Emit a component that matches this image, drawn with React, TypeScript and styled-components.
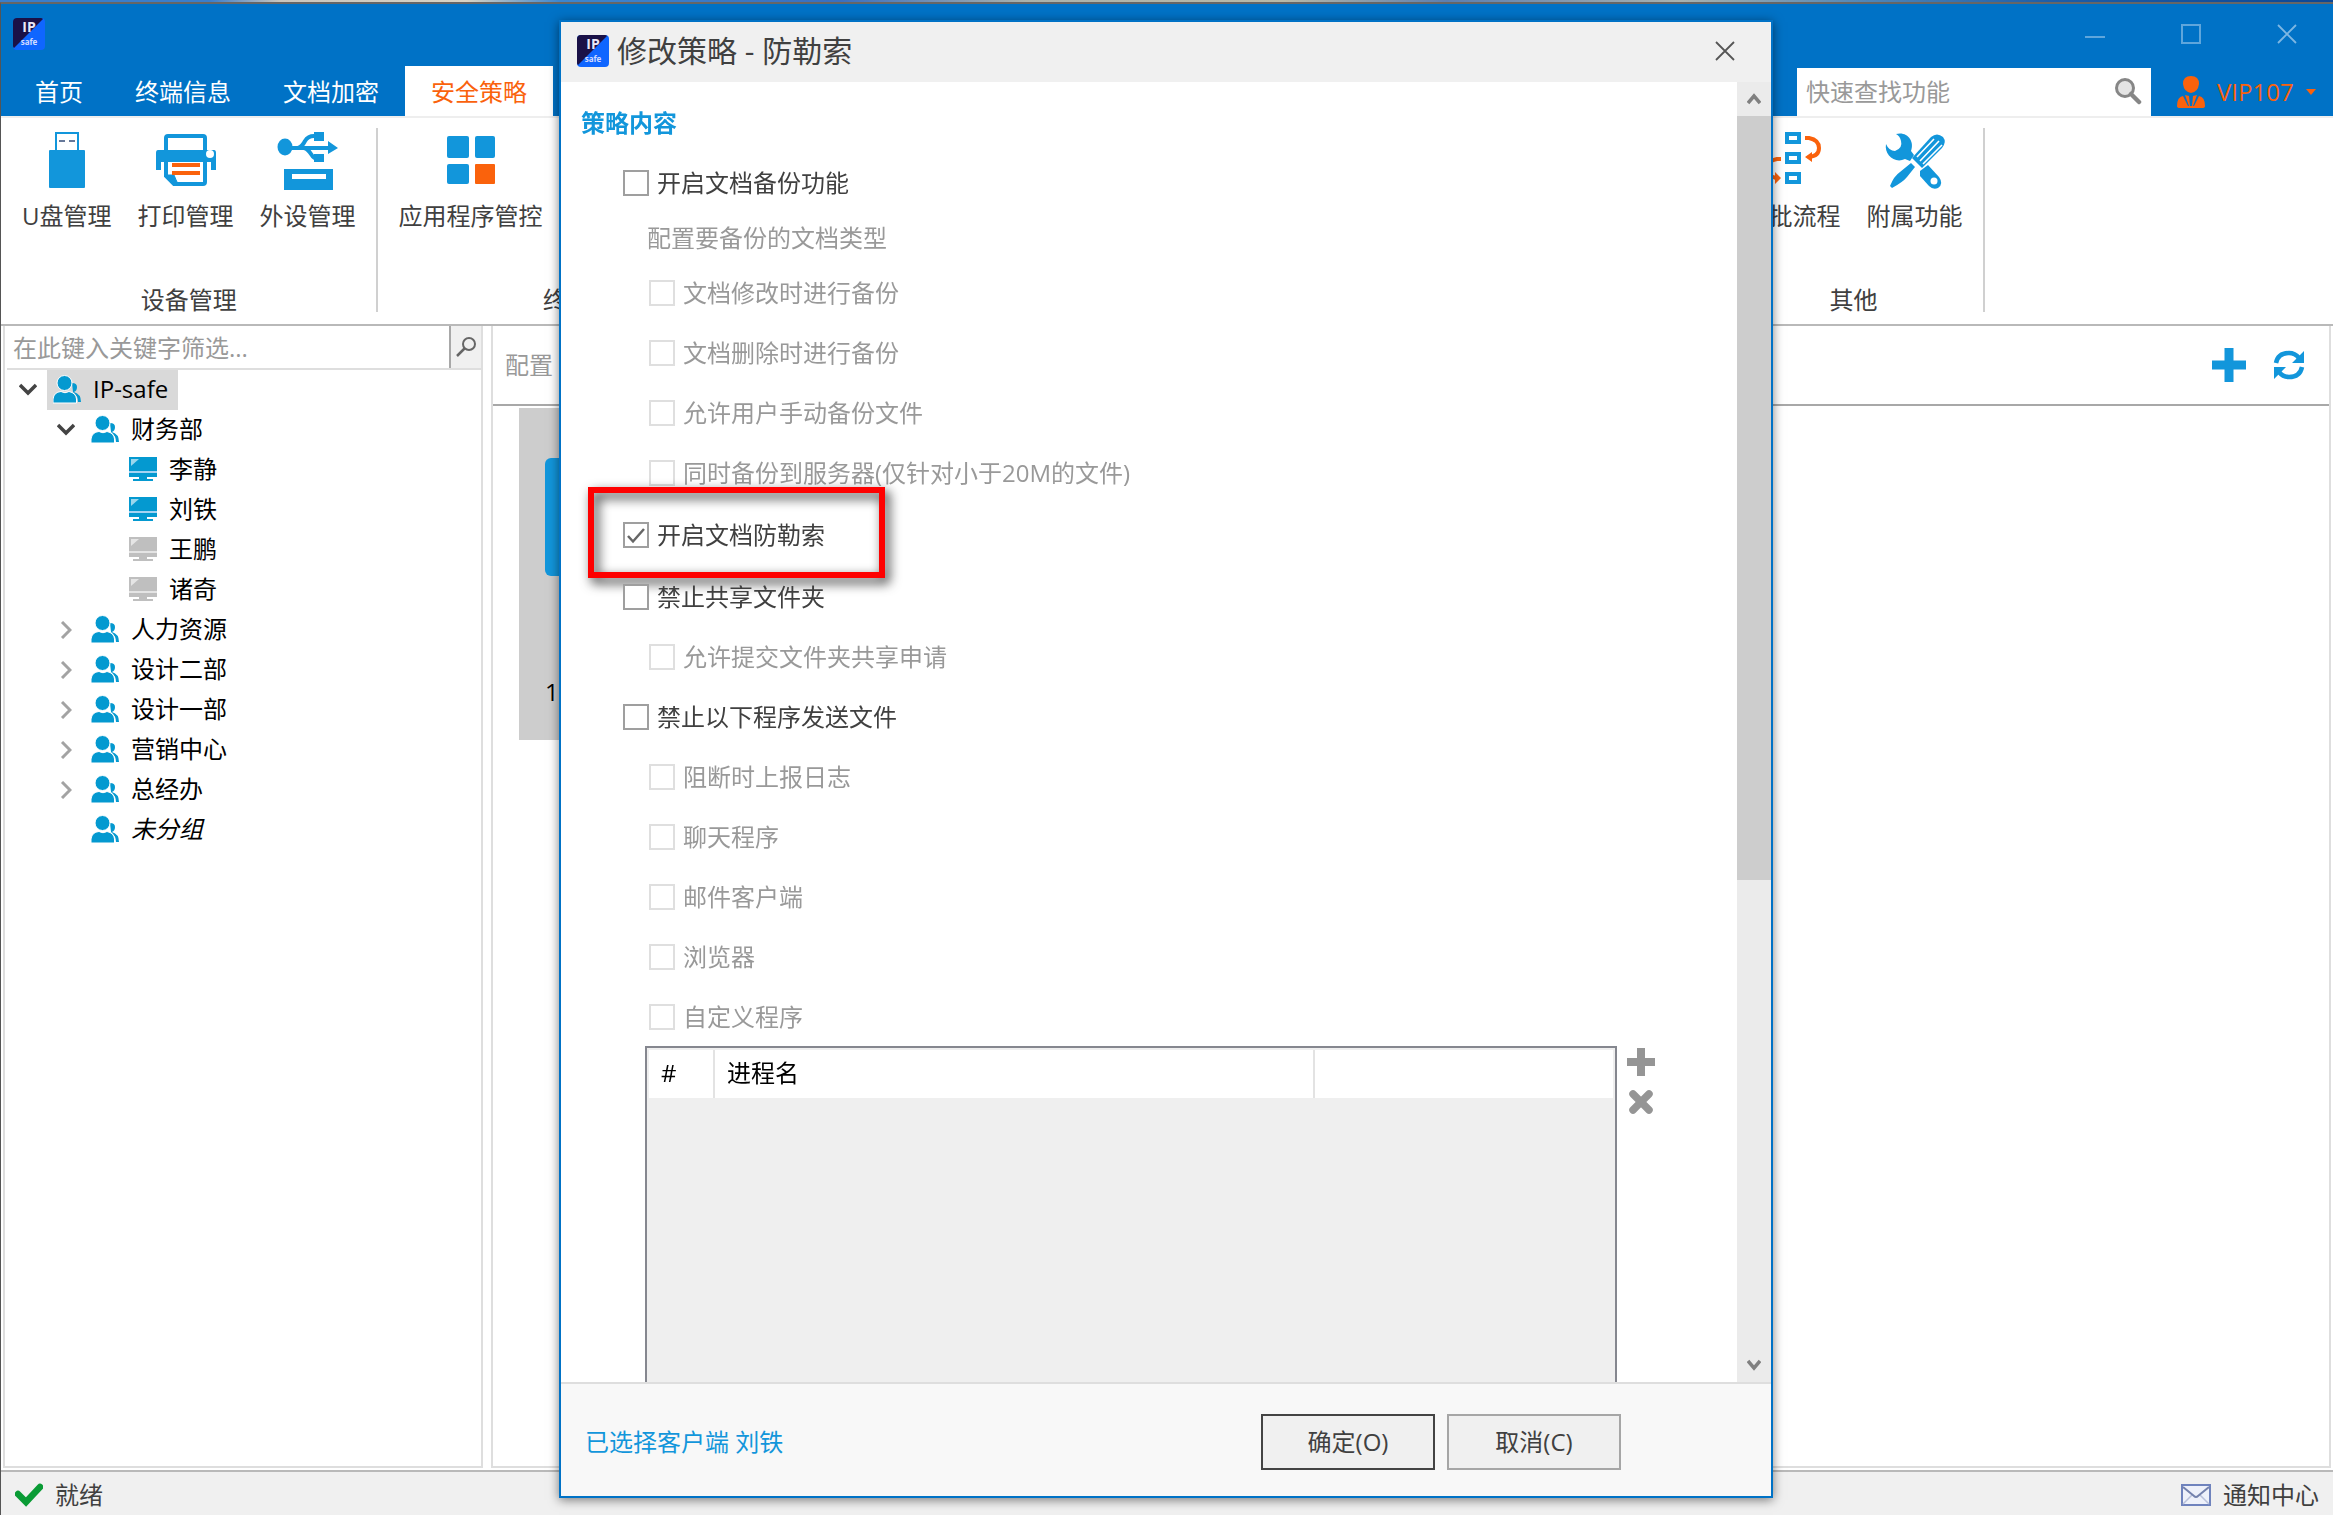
import React from "react";
import styled, { createGlobalStyle, css } from "styled-components";

const c = {
  brand: "#0072c6",
  icon: "#1296db",
  orange: "#fa620c",
  text: "#404040",
  muted: "#999999",
  line: "#dedede",
  rule: "#b9b9b9",
  face: "#f0f0f0",
};

const Global = createGlobalStyle`
  * { box-sizing: border-box; }
  body {
    margin: 0;
    overflow: hidden;
    background: #fff;
    color: ${c.text};
    font: 24px/32px "Open Sans", "Noto Sans CJK SC", sans-serif;
  }
  button, input { font: inherit; color: inherit; }
  button { background: none; border: 0; padding: 0; margin: 0; }
  ul { list-style: none; margin: 0; padding: 0; }
  svg { display: block; flex: none; }
`;

/* ---------- window shell ---------- */

const Shell = styled.div`
  display: flex;
  flex-direction: column;
  height: 100vh;
`;
const Wallpaper = styled.div`
  flex: none;
  height: 2px;
  background: linear-gradient(90deg, #3b7ecb 0 9%, #c9c5bd 12%, #d8d3c4 20%, #3c86cf 24%, #3a6fc0 36%, #aab2ac 44%, #b8b9a8 55%, #5c7fb0 62%, #a8b2b0 72%, #4f86b8 80%, #1d5da8 88%, #0d4795);
`;
const Frame = styled.div`
  flex: 1;
  min-height: 0;
  display: flex;
  flex-direction: column;
  border-top: 2px solid #666;
  border-left: 1px solid #555;
`;
const Header = styled.header`
  background: ${c.brand};
`;
const TitleRow = styled.div`
  height: 62px;
  display: flex;
  align-items: center;
  justify-content: space-between;
  padding: 0 0 2px 12px;
`;
const WindowButtons = styled.div`
  display: flex;
  gap: 4px;
`;
const WindowButton = styled.button`
  width: 92px;
  height: 58px;
  display: grid;
  place-items: center;
`;
const TabRow = styled.div`
  height: 50px;
  display: flex;
  align-items: flex-end;
  padding-left: 8px;
`;
const Tabs = styled.nav`
  display: flex;
  flex: 1;
`;
const Tab = styled.button<{ $active?: boolean }>`
  height: 50px;
  padding: 2px 26px 0;
  white-space: nowrap;
  color: ${(p) => (p.$active ? c.orange : "#fff")};
  background: ${(p) => (p.$active ? "#fff" : "none")};
`;
const QuickSearch = styled.form`
  width: 354px;
  height: 48px;
  display: flex;
  align-items: center;
  background: #fff;
  padding: 0 9px 2px;
`;
const PlainInput = styled.input`
  flex: 1;
  min-width: 0;
  height: 40px;
  border: 0;
  padding: 0;
  outline: 0;
  background: none;
  &::placeholder { color: ${c.muted}; opacity: 1; }
`;
const UserButton = styled.button`
  width: 182px;
  height: 48px;
  padding-left: 26px;
  display: flex;
  align-items: center;
  gap: 12px;
  color: ${c.orange};
`;

/* ---------- ribbon ---------- */

const Ribbon = styled.div`
  flex: none;
  height: 210px;
  display: flex;
  padding-top: 10px;
  border-top: 2px solid #eee;
  border-bottom: 2px solid ${c.rule};
  overflow: hidden;
`;
const Group = styled.section<{ $width?: number }>`
  flex: none;
  width: ${(p) => (p.$width ? `${p.$width}px` : "auto")};
  height: 184px;
  padding: 0 7px 2px 8px;
  display: flex;
  flex-direction: column;
  border-right: 2px solid #d0d0d0;
`;
const GroupItems = styled.div`
  flex: 1;
  display: flex;
  align-items: flex-start;
`;
const GroupLabel = styled.div`
  text-align: center;
  line-height: 20px;
`;
const Tool = styled.button`
  padding: 0 13px;
  display: flex;
  flex-direction: column;
  align-items: center;
  gap: 8px;
  white-space: nowrap;
`;

/* ---------- work area ---------- */

const Main = styled.main`
  flex: 1;
  min-height: 0;
  display: flex;
  gap: 8px;
  padding: 0 2px 2px;
`;
const Pane = styled.section`
  border: solid ${c.line};
  border-width: 0 2px 2px;
  display: flex;
  flex-direction: column;
`;
const SidePane = styled(Pane)`
  width: 480px;
  flex: none;
`;
const ContentPane = styled(Pane)`
  flex: 1;
  min-width: 0;
`;
const Filter = styled.form`
  height: 44px;
  margin-left: 2px;
  padding-left: 6px;
  display: flex;
  align-items: center;
  border-bottom: 2px solid ${c.line};
`;
const FilterButton = styled.button`
  width: 32px;
  align-self: stretch;
  display: grid;
  place-items: center;
  border-left: 2px solid #a8a8a8;
  background: ${c.face};
`;
const Tree = styled.ul`
  padding-left: 4px;
`;
const Branch = styled.ul`
  padding-left: 38px;
`;
const TreeRow = styled.div`
  display: flex;
  height: 40px;
  color: #000;
`;
const Toggle = styled.span`
  width: 38px;
  display: grid;
  place-items: center;
`;
const TreeItem = styled.button<{ $selected?: boolean; $italic?: boolean }>`
  display: flex;
  align-items: center;
  gap: 12px;
  padding: 0 10px 2px 6px;
  background: ${(p) => (p.$selected ? "#d9d9d9" : "none")};
  font-style: ${(p) => (p.$italic ? "italic" : "normal")};
`;
const ContentBar = styled.div`
  height: 80px;
  padding: 0 24px 0 12px;
  display: flex;
  align-items: center;
  gap: 26px;
  color: ${c.muted};
  border-bottom: 2px solid #a8a8a8;
`;
const BarTitle = styled.span`
  flex: 1;
`;
const CardArea = styled.div`
  padding: 2px 26px;
`;
const Card = styled.div`
  width: 220px;
  height: 332px;
  padding: 50px 26px 0;
  background: #cdcdcd;
  color: #000;
`;
const CardTile = styled.div`
  height: 118px;
  margin-bottom: 100px;
  border-radius: 6px;
  background: ${c.icon};
`;
const StatusBar = styled.footer`
  flex: none;
  height: 45px;
  padding: 2px 14px 0;
  display: flex;
  align-items: center;
  justify-content: space-between;
  border-top: 2px solid ${c.rule};
  background: ${c.face};
`;
const StatusItem = styled.span`
  display: flex;
  align-items: center;
  gap: 12px;
`;

/* ---------- dialog ---------- */

const Overlay = styled.div`
  position: fixed;
  inset: 20px 1px 17px 0;
  display: grid;
  justify-content: center;
`;
const Dialog = styled.section`
  width: 1214px;
  min-height: 0;
  display: flex;
  flex-direction: column;
  border: 2px solid ${c.brand};
  background: #fff;
  box-shadow: 0 2px 10px rgba(0, 0, 0, 0.5);
`;
const DialogTitle = styled.header`
  flex: none;
  height: 60px;
  padding: 0 36px 2px 16px;
  display: flex;
  align-items: center;
  gap: 8px;
  background: ${c.face};
`;
const TitleText = styled.h1`
  flex: 1;
  margin: 0;
  font-size: 30px;
  line-height: 40px;
  font-weight: 400;
`;
const DialogMiddle = styled.div`
  flex: 1;
  min-height: 0;
  display: flex;
`;
const DialogBody = styled.div`
  flex: 1;
  min-width: 0;
  padding: 11px 0 0 20px;
  overflow: hidden;
`;
const SectionTitle = styled.h2`
  margin: 0;
  font-size: 24px;
  font-weight: 700;
  line-height: 60px;
  color: ${c.icon};
`;
const OptionGroup = styled.div`
  margin-bottom: 2px;
  padding-left: 42px;
`;
const Caption = styled.p`
  margin: 0;
  padding-left: 24px;
  line-height: 50px;
  color: ${c.muted};
`;
const CheckRow = styled.div<{ $sub?: boolean }>`
  height: 60px;
  display: flex;
  align-items: center;
  padding-left: ${(p) => (p.$sub ? 26 : 0)}px;
`;
const CheckLabel = styled.label<{ $off?: boolean }>`
  position: relative;
  display: flex;
  align-items: center;
  gap: 8px;
  color: ${(p) => (p.$off ? c.muted : c.text)};
`;
const Box = styled.span`
  position: relative;
  width: 26px;
  height: 26px;
  svg { position: absolute; inset: 0; pointer-events: none; }
`;
const CheckInput = styled.input`
  appearance: none;
  display: block;
  width: 26px;
  height: 26px;
  margin: 0;
  border: 2px solid #9f9f9f;
  background: #fff;
  &:disabled { border-color: #dfdfdf; }
`;
const Highlight = styled.span`
  position: absolute;
  top: -32px;
  left: -35px;
  width: 297px;
  height: 91px;
  border: 6px solid #fe0000;
  filter: drop-shadow(4px 5px 6px rgba(0, 0, 0, 0.85));
  pointer-events: none;
`;
const ProcessArea = styled.div`
  margin: -3px 0 0 64px;
  height: 520px;
  display: flex;
`;
const ProcessFrame = styled.div`
  flex: 1;
  padding: 2px;
  border: 2px solid #85878f;
  background: #efefef;
`;
const ProcessTable = styled.table`
  width: 100%;
  table-layout: fixed;
  border-collapse: collapse;
  background: #fff;
  color: #000;
`;
const Th = styled.th<{ $width?: number }>`
  width: ${(p) => (p.$width ? `${p.$width}px` : "auto")};
  height: 48px;
  padding: 0 0 2px 12px;
  text-align: left;
  font-weight: 400;
  & + & { border-left: 2px solid #e3e3e3; }
`;
const ProcessButtons = styled.div`
  width: 120px;
  padding: 2px 0 0 10px;
  display: flex;
  flex-direction: column;
  align-items: flex-start;
  gap: 12px;
`;
const ScrollBar = styled.div`
  width: 34px;
  display: flex;
  flex-direction: column;
  background: #ebebeb;
`;
const ScrollArrow = styled.button`
  height: 34px;
  display: grid;
  place-items: center;
`;
const ScrollTrack = styled.div`
  flex: 1;
`;
const ScrollThumb = styled.div`
  height: 62%;
  background: #cdcdcd;
`;
const DialogFooter = styled.footer`
  flex: none;
  height: 114px;
  padding: 4px 150px 0 24px;
  display: flex;
  align-items: center;
  gap: 12px;
  border-top: 2px solid ${c.line};
  background: #f8f8f8;
`;
const ClientLink = styled.a`
  flex: 1;
  color: ${c.icon};
  text-decoration: none;
`;
const FooterButton = styled.button<{ $primary?: boolean }>`
  width: 174px;
  height: 56px;
  background: ${c.face};
  ${(p) =>
    p.$primary
      ? css`border: 2px solid #444;`
      : css`border: 2px solid #a6a6a6;`}
`;

/* ---------- icons ---------- */

const Logo = () => (
  <svg width="32" height="32" viewBox="0 0 32 32" aria-hidden="true">
    <rect width="32" height="32" rx="4" fill="#0f66ff" />
    <path d="M4 0H28Q29 0 30 1L1 30Q0 29 0 28V4Q0 0 4 0Z" fill="#1a1147" />
    <text x="16" y="14" textAnchor="middle" fontFamily="Open Sans, sans-serif" fontSize="14" fontWeight="700" fill="#e8e8f8">IP</text>
    <text x="16" y="27" textAnchor="middle" fontFamily="Open Sans, sans-serif" fontSize="8" fontWeight="700" fill="#d3dcff">safe</text>
  </svg>
);

const UsbDrive = () => (
  <svg width="64" height="64" viewBox="0 0 64 64">
    <rect x="21" y="5" width="22" height="20" fill="#fff" stroke={c.icon} strokeWidth="2" />
    <path d="M24 13h6M34 13h6" stroke="#66799a" strokeWidth="2" />
    <rect x="14" y="22" width="36" height="38" rx="1" fill={c.icon} />
  </svg>
);
const Printer = () => (
  <svg width="64" height="64" viewBox="0 0 64 64">
    <path d="M12 22V10q0-2 2-2H49q2 0 2 2V22" fill="none" stroke={c.icon} strokeWidth="4" />
    <path d="M4 22H60Q62 22 62 25V42H57V34H7V42H2V25Q2 22 4 22Z" fill={c.icon} />
    <circle cx="56" cy="26" r="4" fill="#fff" />
    <path d="M12 34V48L20 56H49q2 0 2-2V34" fill="#fff" stroke={c.icon} strokeWidth="4" />
    <path d="M12 47H20Q22 52 24 56H19Z" fill={c.icon} stroke={c.icon} />
    <path d="M18 37H46M18 45H46" stroke={c.orange} strokeWidth="4" />
  </svg>
);
const Peripheral = () => (
  <svg width="64" height="64" viewBox="0 0 64 64">
    <g fill="none" stroke={c.icon} strokeWidth="4">
      <path d="M8 20H54M22 20Q26 19 29 13Q32 8 38 8H42M28 20Q32 21 35 26Q38 31 42 31" />
    </g>
    <ellipse cx="9" cy="19" rx="7.5" ry="8.5" fill={c.icon} />
    <path d="M52 13L62 20L52 26ZM38 4H48V13H38ZM38 26H48V34H38Z" fill={c.icon} />
    <path d="M8 41H57V62H8ZM16 46V51H50V46Z" fill={c.icon} fillRule="evenodd" />
  </svg>
);
const AppGrid = () => (
  <svg width="64" height="64" viewBox="0 0 64 64">
    <g fill={c.icon}>
      <rect x="8" y="8" width="22" height="22" rx="2" />
      <rect x="36" y="8" width="20" height="22" rx="2" />
      <rect x="8" y="36" width="22" height="20" rx="2" />
    </g>
    <rect x="36" y="36" width="20" height="20" rx="1" fill={c.orange} />
  </svg>
);
const Flow = () => (
  <svg width="64" height="64" viewBox="0 0 64 64">
    <g fill="none" stroke={c.icon} strokeWidth="4">
      <rect x="26" y="6" width="12" height="8" />
      <rect x="26" y="26" width="12" height="8" />
      <rect x="26" y="46" width="12" height="8" />
    </g>
    <g fill="none" stroke={c.orange} strokeWidth="4">
      <path d="M44 10H48Q58 12 58 20Q58 28 48 29" />
      <path d="M20 31H16Q6 33 6 40Q6 48 15 50" />
    </g>
    <path d="M44 29L51 24V34ZM20 50L14 44V56Z" fill={c.orange} />
  </svg>
);
const Tools = () => (
  <svg width="64" height="64" viewBox="0 0 64 64">
    <path d="M13 6C24 3 32 13 28 23L31 27L27 33L22 31C12 36 1 27 3 16Q6 23 12 23Q20 20 18 13Q17 8 13 6Z" fill={c.icon} />
    <path d="M37 43L45 37L56 49Q61 56 55 60Q50 62 46 58L37 48Z" fill={c.icon} />
    <circle cx="51" cy="53" r="3.5" fill="#fff" />
    <path d="M29 30L48 9Q54 4 60 9Q64 14 59 20L39 40Z" fill={c.icon} />
    <path d="M34 29L51 11M37 33L56 13M40 36L59 17" stroke="#fff" strokeWidth="1.6" />
    <path d="M28 35L32 39L24 49Q20 54 9 60L7 58Q11 48 17 44Z" fill={c.icon} />
  </svg>
);
const People = () => (
  <svg width="28" height="30" viewBox="0 0 28 30">
    <g fill="#0499d0">
      <path d="M19 9Q24 9 24 13Q24 17 21 18Q28 20 28 28H25Q25 22 20 18Z" />
      <circle cx="11.5" cy="9" r="7.5" stroke="#fff" strokeWidth="1" />
      <path d="M0 29V25Q1 18 8 17.5Q12 20 16 17.5Q23 19 23.5 25V29Z" stroke="#fff" strokeWidth="1" />
    </g>
  </svg>
);
const Monitor = ({ off }: { off?: boolean }) => (
  <svg width="28" height="24" viewBox="0 0 28 24">
    <g fill={off ? "#bfbfbf" : "#0499d0"}>
      <path d="M0 0H28V14H0ZM0 16H28V20H0ZM10 20H18V22H24V24H4V22H10Z" />
    </g>
    <rect y="14" width="28" height="2" fill={off ? "#e4e4e4" : "#a5d3f2"} />
    <path d="M2 2H10L2 9Z" fill="#fff" opacity=".6" />
  </svg>
);
const ChevronDown = () => (
  <svg width="18" height="14" viewBox="0 0 18 14">
    <path d="M1 2L9 10L17 2" fill="none" stroke="#444" strokeWidth="3.5" />
  </svg>
);
const ChevronRight = () => (
  <svg width="12" height="18" viewBox="0 0 12 18">
    <path d="M2 1L10 9L2 17" fill="none" stroke="#a3a3a3" strokeWidth="3" />
  </svg>
);
const Cross = ({ color }: { color: string }) => (
  <svg width="20" height="20" viewBox="0 0 20 20">
    <path d="M1 1L19 19M19 1L1 19" stroke={color} strokeWidth="1.8" />
  </svg>
);

/* ---------- data ---------- */

type Node = {
  name: string;
  kind?: "online" | "offline";
  open?: boolean;
  leaf?: boolean;
  children?: Node[];
};

const tree: Node[] = [
  {
    name: "IP-safe",
    open: true,
    children: [
      {
        name: "财务部",
        open: true,
        children: [
          { name: "李静", kind: "online" },
          { name: "刘铁", kind: "online" },
          { name: "王鹏", kind: "offline" },
          { name: "诸奇", kind: "offline" },
        ],
      },
      { name: "人力资源" },
      { name: "设计二部" },
      { name: "设计一部" },
      { name: "营销中心" },
      { name: "总经办" },
      { name: "未分组", leaf: true },
    ],
  },
];

const TreeNode = ({ node, root }: { node: Node; root?: boolean }) => (
  <li>
    <TreeRow>
      <Toggle>{node.kind || node.leaf ? null : node.open ? <ChevronDown /> : <ChevronRight />}</Toggle>
      <TreeItem type="button" $selected={root} $italic={node.leaf}>
        {node.kind ? <Monitor off={node.kind === "offline"} /> : <People />}
        {node.name}
      </TreeItem>
    </TreeRow>
    {node.children && (
      <Branch>
        {node.children.map((n) => (
          <TreeNode key={n.name} node={n} />
        ))}
      </Branch>
    )}
  </li>
);

type Option = { label: string; sub?: boolean; off?: boolean; checked?: boolean; marked?: boolean };

const Check = ({ label, sub, off, checked, marked }: Option) => (
  <CheckRow $sub={sub}>
    <CheckLabel $off={off}>
      <Box>
        <CheckInput type="checkbox" disabled={off} defaultChecked={checked} />
        {checked && (
          <svg width="26" height="26" viewBox="0 0 26 26">
            <path d="M5 14L10 19.5L21 7" fill="none" stroke="#666" strokeWidth="2.5" />
          </svg>
        )}
      </Box>
      {label}
      {marked && <Highlight />}
    </CheckLabel>
  </CheckRow>
);

const tools = {
  device: [
    { label: "U盘管理", icon: <UsbDrive /> },
    { label: "打印管理", icon: <Printer /> },
    { label: "外设管理", icon: <Peripheral /> },
  ],
  terminal: [{ label: "应用程序管控", icon: <AppGrid /> }],
  other: [
    { label: "审批流程", icon: <Flow /> },
    { label: "附属功能", icon: <Tools /> },
  ],
};

const RibbonGroup = ({ label, items, width }: { label?: string; items: { label: string; icon: React.ReactNode }[]; width?: number }) => (
  <Group $width={width}>
    <GroupItems>
      {items.map((t) => (
        <Tool key={t.label} type="button">
          {t.icon}
          {t.label}
        </Tool>
      ))}
    </GroupItems>
    <GroupLabel>{label}</GroupLabel>
  </Group>
);

export default function App() {
  return (
    <>
      <Global />
      <Shell>
        <Wallpaper />
        <Frame>
          <Header>
            <TitleRow>
              <Logo />
              <WindowButtons>
                <WindowButton type="button" aria-label="最小化">
                  <svg width="20" height="20" viewBox="0 0 20 20"><path d="M0 13H20" stroke="#5fa6dc" strokeWidth="2" /></svg>
                </WindowButton>
                <WindowButton type="button" aria-label="最大化">
                  <svg width="20" height="20" viewBox="0 0 20 20"><rect x="1" y="1" width="18" height="18" fill="none" stroke="#5fa6dc" strokeWidth="2" /></svg>
                </WindowButton>
                <WindowButton type="button" aria-label="关闭"><Cross color="#7db7e3" /></WindowButton>
              </WindowButtons>
            </TitleRow>
            <TabRow>
              <Tabs>
                <Tab>首页</Tab>
                <Tab>终端信息</Tab>
                <Tab>文档加密</Tab>
                <Tab $active>安全策略</Tab>
              </Tabs>
              <QuickSearch>
                <PlainInput aria-label="快速查找功能" placeholder="快速查找功能" />
                <svg width="28" height="28" viewBox="0 0 28 28">
                  <circle cx="11" cy="11" r="8.5" fill="#e4e4e4" stroke="#868686" strokeWidth="3" />
                  <path d="M17 17L25 25" stroke="#868686" strokeWidth="4.5" strokeLinecap="round" />
                </svg>
              </QuickSearch>
              <UserButton type="button">
                <svg width="28" height="32" viewBox="0 0 28 32" fill={c.orange}>
                  <path d="M14 0Q22 0 22 8Q21 16 14 17Q7 16 6 8Q6 0 14 0Z" />
                  <path d="M8 19L12 30H11L6 20Q0 21 0 30Q0 32 3 32H25Q28 32 28 30Q28 21 22 20L17 30H16L20 19L16 20L15 30H13L12 20Z" />
                </svg>
                VIP107
                <svg width="10" height="6" viewBox="0 0 10 6"><path d="M0 0H10L5 6Z" fill={c.orange} /></svg>
              </UserButton>
            </TabRow>
          </Header>

          <Ribbon>
            <RibbonGroup label="设备管理" items={tools.device} />
            <RibbonGroup label="终端管理" items={tools.terminal} width={428} />
            <RibbonGroup items={[]} width={918} />
            <RibbonGroup label="其他" items={tools.other} />
          </Ribbon>

          <Main>
            <SidePane>
              <Filter>
                <PlainInput aria-label="筛选" placeholder="在此键入关键字筛选..." />
                <FilterButton type="button" aria-label="筛选">
                  <svg width="20" height="20" viewBox="0 0 20 20" fill="none" stroke="#666">
                    <circle cx="13" cy="7" r="6" strokeWidth="2" />
                    <path d="M8.5 11.5L1 19" strokeWidth="2.5" />
                  </svg>
                </FilterButton>
              </Filter>
              <Tree>
                {tree.map((n) => (
                  <TreeNode key={n.name} node={n} root />
                ))}
              </Tree>
            </SidePane>
            <ContentPane>
              <ContentBar>
                <BarTitle>配置</BarTitle>
                <button type="button" aria-label="添加">
                  <svg width="36" height="36" viewBox="0 0 36 36">
                    <path d="M18 1V35M1 18H35" stroke={c.icon} strokeWidth="9" />
                  </svg>
                </button>
                <button type="button" aria-label="刷新">
                  <svg width="32" height="32" viewBox="0 0 32 32">
                    <path d="M3 14Q5 4 16 4Q22 4 26 9M29 18Q27 28 16 28Q10 28 6 23" fill="none" stroke={c.icon} strokeWidth="4.5" />
                    <path d="M31 2V14H19ZM1 30V18H13Z" fill={c.icon} />
                  </svg>
                </button>
              </ContentBar>
              <CardArea>
                <Card>
                  <CardTile />
                  1
                </Card>
              </CardArea>
            </ContentPane>
          </Main>

          <StatusBar>
            <StatusItem>
              <svg width="28" height="24" viewBox="0 0 28 24">
                <path d="M3 11L11 19L25 4" fill="none" stroke="#0a9b35" strokeWidth="6.5" strokeLinecap="round" />
              </svg>
              就绪
            </StatusItem>
            <StatusItem>
              <svg width="30" height="22" viewBox="0 0 30 22">
                <rect x="1" y="1" width="28" height="20" fill="#eef1fa" stroke="#6f83bd" strokeWidth="2" />
                <path d="M2 20L11 11M28 20L19 11" stroke="#b9c1da" strokeWidth="1.5" />
                <path d="M2 3L13 12Q15 14 17 12L28 3" fill="none" stroke="#7482ad" strokeWidth="2" />
              </svg>
              通知中心
            </StatusItem>
          </StatusBar>
        </Frame>
      </Shell>

      <Overlay>
        <Dialog role="dialog" aria-labelledby="dialog-title">
          <DialogTitle>
            <Logo />
            <TitleText id="dialog-title">修改策略 - 防勒索</TitleText>
            <button type="button" aria-label="关闭"><Cross color="#555" /></button>
          </DialogTitle>
          <DialogMiddle>
            <DialogBody>
              <SectionTitle>策略内容</SectionTitle>
              <OptionGroup>
                <Check label="开启文档备份功能" />
                <Caption>配置要备份的文档类型</Caption>
                <Check sub off label="文档修改时进行备份" />
                <Check sub off label="文档删除时进行备份" />
                <Check sub off label="允许用户手动备份文件" />
                <Check sub off label="同时备份到服务器(仅针对小于20M的文件)" />
              </OptionGroup>
              <OptionGroup>
                <Check checked marked label="开启文档防勒索" />
              </OptionGroup>
              <OptionGroup>
                <Check label="禁止共享文件夹" />
                <Check sub off label="允许提交文件夹共享申请" />
                <Check label="禁止以下程序发送文件" />
                <Check sub off label="阻断时上报日志" />
                <Check sub off label="聊天程序" />
                <Check sub off label="邮件客户端" />
                <Check sub off label="浏览器" />
                <Check sub off label="自定义程序" />
              </OptionGroup>
              <ProcessArea>
                <ProcessFrame>
                  <ProcessTable>
                    <thead>
                      <tr>
                        <Th $width={65}>#</Th>
                        <Th $width={600}>进程名</Th>
                        <Th aria-label="操作" />
                      </tr>
                    </thead>
                  </ProcessTable>
                </ProcessFrame>
                <ProcessButtons>
                  <button type="button" aria-label="添加进程">
                    <svg width="28" height="28" viewBox="0 0 28 28"><path d="M14 0V28M0 14H28" stroke="#959595" strokeWidth="8" /></svg>
                  </button>
                  <button type="button" aria-label="删除进程">
                    <svg width="28" height="28" viewBox="0 0 28 28"><path d="M6 6L22 22M22 6L6 22" stroke="#959595" strokeWidth="7.5" strokeLinecap="round" /></svg>
                  </button>
                </ProcessButtons>
              </ProcessArea>
            </DialogBody>
            <ScrollBar>
              <ScrollArrow type="button" aria-label="向上滚动">
                <svg width="14" height="12" viewBox="0 0 14 12"><path d="M1 10L7 3L13 10" fill="none" stroke="#808080" strokeWidth="3.5" /></svg>
              </ScrollArrow>
              <ScrollTrack><ScrollThumb /></ScrollTrack>
              <ScrollArrow type="button" aria-label="向下滚动">
                <svg width="14" height="12" viewBox="0 0 14 12"><path d="M1 2L7 9L13 2" fill="none" stroke="#808080" strokeWidth="3.5" /></svg>
              </ScrollArrow>
            </ScrollBar>
          </DialogMiddle>
          <DialogFooter>
            <ClientLink href="#client">已选择客户端 刘铁</ClientLink>
            <FooterButton type="button" $primary>确定(O)</FooterButton>
            <FooterButton type="button">取消(C)</FooterButton>
          </DialogFooter>
        </Dialog>
      </Overlay>
    </>
  );
}
